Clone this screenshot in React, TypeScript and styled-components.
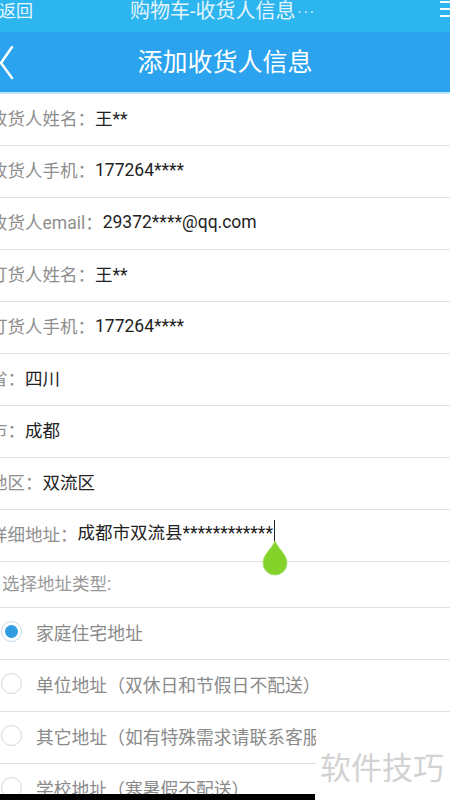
import React from "react";
import styled, { createGlobalStyle } from "styled-components";

const GlobalStyle = createGlobalStyle`
  html, body { margin: 0; padding: 0; background: #fff; overflow: hidden; }
  * { box-sizing: border-box; }
`;

const FONT = `"Roboto", "Noto Sans CJK SC", "Noto Sans", sans-serif`;

const Screen = styled.div`
  position: relative;
  width: 450px;
  height: 800px;
  overflow: hidden;
  background: #fff;
  font-family: ${FONT};
`;

const TopBar = styled.div`
  height: 32px;
  background: #2db5ef;
  display: grid;
  grid-template-columns: 1fr auto 1fr;
  align-items: start;
  color: #eaf7fe;
`;

const TopBack = styled.span`
  font-size: 17px;
  line-height: 22px;
  margin-left: -1px;
`;

const TopTitle = styled.span`
  font-size: 20px;
  line-height: 22px;
  color: #e3f4fd;
  white-space: nowrap;
  margin-left: -4px;
`;

const Dots = styled.span`
  letter-spacing: 2px;
  margin-left: 2px;
  font-size: 16px;
`;

const TopMenu = styled.div`
  justify-self: end;
  display: flex;
  flex-direction: column;
  gap: 5px;
  padding-top: 1px;
  width: 10px;
`;

const MenuLine = styled.span`
  display: block;
  height: 2px;
  background: #f1faff;
`;

const Header = styled.div`
  height: 62px;
  background: #2ba3ef;
  border-bottom: 2px solid #bde8fb;
  display: grid;
  grid-template-columns: 1fr auto 1fr;
  align-items: center;
`;

const HeaderTitle = styled.h1`
  margin: 0;
  font-size: 25px;
  font-weight: 400;
  color: #fff;
  line-height: 30px;
  padding-top: 1px;
`;

const BackIcon = styled.svg`
  width: 14px;
  height: 34px;
  margin-top: 2px;
`;

const Row = styled.div<{ $h?: number }>`
  height: ${(p) => p.$h ?? 52}px;
  border-bottom: 1px solid #e0e0e0;
  display: flex;
  align-items: center;
  padding-bottom: 4px;
  font-size: 17.5px;
  white-space: nowrap;
  position: relative;
`;

const Label = styled.span`
  color: #8e8e8e;
  margin-left: -10px;
`;

const Value = styled.span`
  color: #222;
`;

const SectionTitle = styled.span`
  color: #999;
  margin-left: 2px;
`;

const RadioCircle = styled.span<{ $on?: boolean }>`
  width: 21px;
  height: 21px;
  border-radius: 50%;
  margin-left: 1px;
  border: 1.5px solid ${(p) => (p.$on ? "#c9d9e6" : "#d6d6d6")};
  display: flex;
  align-items: center;
  justify-content: center;
  flex: none;
  &::after {
    content: "";
    display: ${(p) => (p.$on ? "block" : "none")};
    width: 13px;
    height: 13px;
    border-radius: 50%;
    background: #329ce3;
  }
`;

const RadioText = styled.span`
  color: #8a8a8a;
  margin-left: 14px;
  font-size: 17.8px;
`;

const Cursor = styled.span`
  display: inline-block;
  width: 1.5px;
  height: 28px;
  background: #222;
  vertical-align: middle;
  margin-left: 1px;
  position: relative;
  top: 0px;
`;

const Handle = styled.svg`
  position: absolute;
  left: 262px;
  top: 539px;
  width: 26px;
  height: 38px;
  z-index: 2;
`;

const Watermark = styled.div`
  position: absolute;
  left: 316px;
  top: 724px;
  width: 134px;
  padding: 22px 0 0 4px;
  background: #fff;
  color: #d2d2d2;
  font-size: 31px;
  line-height: 40px;
  white-space: nowrap;
  font-family: "Noto Sans CJK SC", sans-serif;
`;

const BottomBar = styled.div`
  position: absolute;
  left: 0;
  top: 794px;
  width: 315px;
  height: 6px;
  background: #000;
`;

const fields: [string, string][] = [
  ["收货人姓名：", "王**"],
  ["收货人手机：", "177264****"],
  ["收货人email：", " 29372****@qq.com"],
  ["订货人姓名：", "王**"],
  ["订货人手机：", "177264****"],
  ["省：", "四川"],
  ["市：", "成都"],
  ["地区：", "双流区"],
];

const radios = [
  "家庭住宅地址",
  "单位地址（双休日和节假日不配送）",
  "其它地址（如有特殊需求请联系客服）",
  "学校地址（寒暑假不配送）",
];

export default function App() {
  return (
    <Screen>
      <GlobalStyle />
      <TopBar>
        <TopBack>返回</TopBack>
        <TopTitle>
          购物车-收货人信息<Dots>···</Dots>
        </TopTitle>
        <TopMenu>
          <MenuLine />
          <MenuLine />
          <MenuLine />
        </TopMenu>
      </TopBar>
      <Header>
        <BackIcon viewBox="0 0 14 34">
          <polyline points="12,1 1,17 12,32" fill="none" stroke="#fff" strokeWidth="2.4" strokeLinecap="round" strokeLinejoin="round" />
        </BackIcon>
        <HeaderTitle>添加收货人信息</HeaderTitle>
        <span />
      </Header>
      {fields.map(([l, v], i) => (
        <Row key={i}>
          <Label>{l}</Label>
          <Value>{v}</Value>
        </Row>
      ))}
      <Row>
        <Label>详细地址：</Label>
        <Value>
          成都市双流县************
          <Cursor />
        </Value>
      </Row>
      <Row $h={46}>
        <SectionTitle>选择地址类型:</SectionTitle>
      </Row>
      {radios.map((r, i) => (
        <Row key={r}>
          <RadioCircle $on={i === 0} />
          <RadioText>{r}</RadioText>
        </Row>
      ))}
      <Handle viewBox="0 0 26 38">
        <path d="M13 2 C16 10 25 15 25 24 A12 12 0 0 1 1 24 C1 15 10 10 13 2 Z" fill="#83d32b" stroke="#a6e06a" strokeWidth="1" />
      </Handle>
      <Watermark>软件技巧</Watermark>
      <BottomBar />
    </Screen>
  );
}
